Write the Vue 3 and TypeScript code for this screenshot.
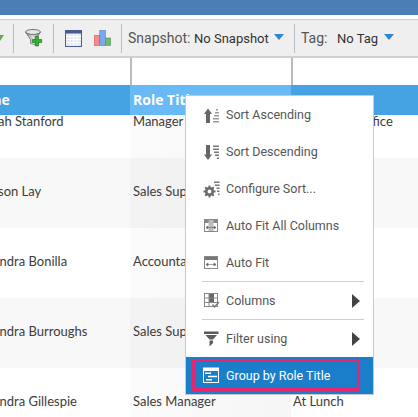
<script setup lang="ts">
interface Row { name: string; role: string; status: string }
const rows: Row[] = [
  { name: 'Sarah Stanford', role: 'Manager', status: 'Away from Office' },
  { name: 'Allison Lay', role: 'Sales Support', status: 'In Office' },
  { name: 'Leandra Bonilla', role: 'Accountant', status: 'In Office' },
  { name: 'Leandra Burroughs', role: 'Sales Support', status: 'In Office' },
  { name: 'Leandra Gillespie', role: 'Sales Manager', status: 'At Lunch' }
]
</script>

<template>
  <div class="page">
    <div class="topbar"></div>
    <div class="toolbar">
      <svg class="ico-arrow" width="4" height="10" viewBox="0 0 4 10"><path d="M-4 2H4L0 8Z" fill="#6aa84f" /></svg>
      <span class="sep s1"></span>
      <svg class="tool funnel" width="18" height="18" viewBox="0 0 18 18">
        <defs>
          <linearGradient id="fg" x1="0" x2="1" y1="0" y2="0"><stop offset="0" stop-color="#7f8a7f" /><stop offset=".5" stop-color="#dfe4df" /><stop offset="1" stop-color="#6d776d" /></linearGradient>
        </defs>
        <ellipse cx="8" cy="3" rx="7.5" ry="2.5" fill="#e4e8e4" stroke="#6f776f" />
        <path d="M.8 3.6 5.5 10.5V14.5L10.5 16V10.5L15.2 3.6C11 6.4 5 6.4 .8 3.6Z" fill="url(#fg)" stroke="#666e66" stroke-width=".7" />
        <path d="M10.5 7.5h3v3h3.2v3h-3.2v3.5h-3V13.500H7.300v-3h3.200Z" fill="#35b035" stroke="#1f7d1f" stroke-width=".7" />
      </svg>
      <span class="sep s2"></span>
      <svg class="tool table" width="17" height="17" viewBox="0 0 17 17">
        <rect x=".5" y=".5" width="16" height="16" fill="#e6e6f0" stroke="#4a5f92" />
        <rect x="0" y="0" width="17" height="3.5" fill="#465a8d" />
        <path d="M1 6.500H16M1 9.500H16M1 12.500H16M5 4V16M8.500 4V16M12 4V16" stroke="#fff" stroke-width="1" />
      </svg>
      <svg class="tool chart" width="17" height="16" viewBox="0 0 17 16">
        <rect x="0" y="5.500" width="5.500" height="10" fill="#f58a8a" stroke="#d94f4f" stroke-width=".6" />
        <rect x="5.800" y=".5" width="5.500" height="15" fill="#78a8ee" stroke="#4a7fd0" stroke-width=".6" />
        <rect x="11.600" y="8" width="5" height="7.500" fill="#72b772" stroke="#4a944a" stroke-width=".6" />
      </svg>
      <span class="sep s3"></span>
      <span class="lbl snap">Snapshot:</span>
      <span class="val nosnap">No Snapshot</span>
      <span class="caret c1"></span>
      <span class="sep s4"></span>
      <span class="lbl tag">Tag:</span>
      <span class="val notag">No Tag</span>
      <span class="caret c2"></span>
    </div>
    <div class="spacer">
      <span class="line l1"></span>
      <span class="line l2"></span>
    </div>
    <div class="grid">
      <div class="head">
        <div class="hc name">Name</div>
        <div class="hc role">Role Title</div>
        <div class="hc status">Status</div>
      </div>
      <div class="body">
        <div v-for="(r, i) in rows" :key="r.name" class="row" :class="{ alt: i % 2 === 1 }">
          <div class="c name">{{ r.name }}</div>
          <div class="c role">{{ r.role }}</div>
          <div class="c status">{{ r.status }}</div>
        </div>
      </div>
    </div>

    <div class="menu">
      <div class="item">
        <svg class="mi" width="18" height="18" viewBox="0 0 18 18">
          <path d="M5 2.500 9 8H7V17H3V8H1Z" fill="#666" />
          <path d="M13 3h2v1.500h-2zM12 6h4v1.500h-4zM11 9h5v1.500h-5zM10 12h6v1.500h-6zM10 15h6v1.500h-6z" fill="#999" />
        </svg>
        <span>Sort Ascending</span>
      </div>
      <div class="item">
        <svg class="mi" width="18" height="18" viewBox="0 0 18 18">
          <path d="M3 2H7V11.500H9L5 17 1 11.500H3Z" fill="#666" />
          <path d="M10 2.500h6v1.500h-6zM10 5.500h6v1.500h-6zM11 8.500h5v1.500h-5zM12 11.500h4v1.500h-4zM14 14.500h2v1.500h-2z" fill="#777" />
        </svg>
        <span>Sort Descending</span>
      </div>
      <div class="item">
        <svg class="mi" width="18" height="18" viewBox="0 0 18 18">
          <circle cx="6.500" cy="11.500" r="3.300" fill="none" stroke="#6a6a6a" stroke-width="2.600" />
          <path d="M6.500 5.500v2M6.500 15.500v2M.5 11.500h2M10.500 11.500h2M2.300 7.300l1.400 1.400M9.300 14.300l1.400 1.400M10.700 7.300l-1.400 1.400M3.700 14.300l-1.400 1.400" stroke="#6a6a6a" stroke-width="2" />
          <path d="M11 1.500h5.500v1.500H11zM12 4.500h4.500v1.500H12zM13.500 7.500h3v1.500h-3zM14 10.500h2.500v1.500H14zM15 13.500h1.500v1.500H15z" fill="#777" />
        </svg>
        <span>Configure Sort...</span>
      </div>
      <div class="item">
        <svg class="mi" width="18" height="18" viewBox="0 0 18 18">
          <rect x="1.500" y="2.500" width="13" height="12" fill="#fff" stroke="#888" />
          <rect x="2" y="3" width="12" height="3" fill="#888" />
          <rect x="5.500" y="3" width="5" height="11" fill="#bdbdbd" />
          <path d="M3 10.500H13M3 10.500l2-1.500V12ZM13 10.500l-2-1.500V12Z" fill="#666" stroke="#666" stroke-width=".6" />
        </svg>
        <span>Auto Fit All Columns</span>
      </div>
      <div class="item">
        <svg class="mi" width="18" height="18" viewBox="0 0 18 18">
          <rect x="1.500" y="2.500" width="13" height="12" fill="#fff" stroke="#888" />
          <rect x="2" y="3" width="12" height="3" fill="#777" />
          <path d="M3 10.500H13M3 10.500l2-1.500V12ZM13 10.500l-2-1.500V12Z" fill="#666" stroke="#666" stroke-width=".6" />
        </svg>
        <span>Auto Fit</span>
      </div>
      <div class="rule"></div>
      <div class="item">
        <svg class="mi" width="18" height="18" viewBox="0 0 18 18">
          <rect x="1.500" y="1.500" width="13" height="13" fill="#fff" stroke="#888" />
          <rect x="6" y="2" width="5" height="9" fill="#666" />
          <path d="M2 6H14M2 10.500H14M6 2V14" stroke="#888" />
          <path d="M9.500 12.500l2 2.500 4.500-5" fill="none" stroke="#777" stroke-width="1.300" />
        </svg>
        <span>Columns</span>
        <span class="tri"></span>
      </div>
      <div class="rule r2"></div>
      <div class="item">
        <svg class="mi" width="18" height="18" viewBox="0 0 18 18">
          <path d="M1 1.500H15.500V4H1ZM2.500 5H14L10 9.500H6.500ZM6.500 10.500H10V13L7 16H6.500Z" fill="#5c5c5c" />
        </svg>
        <span>Filter using</span>
        <span class="tri"></span>
      </div>
      <div class="item active">
        <svg class="mi" width="18" height="18" viewBox="0 0 18 18">
          <rect x="0" y=".5" width="16" height="15.500" fill="#fff" />
          <rect x="1" y="4" width="14" height="11" fill="#1b7ecb" />
          <path d="M2 6.200H8M5 9.500H14M3 12.800H9" stroke="#fff" stroke-width="1.400" />
        </svg>
        <span>Group by Role Title</span>
        <span class="mark"></span>
      </div>
    </div>
  </div>
</template>

<style>
html, body { margin: 0; overflow: hidden; background: #fff; }
</style>

<style scoped>
.page { position: relative; width: 418px; height: 417px; overflow: hidden; background: #fff; font-family: "Roboto", sans-serif; }
.topbar { height: 15px; background: #4a7eb4; }
.toolbar { margin-top: 4px; height: 36px; border-top: 1px solid #cfcfcf; border-bottom: 2px solid #cfcfcf; background: #efefef; display: flex; align-items: center; white-space: nowrap; }
.ico-arrow { width: 4px; flex: none; }
.sep { width: 1px; height: 29px; background: #b4bec9; flex: none; }
.s1 { margin-left: 9px; }
.funnel { margin-left: 11px; margin-right: 10px; }
.table { margin-left: 11px; }
.chart { margin-left: 12px; }
.s3 { margin-left: 10px; }
.lbl { font-size: 14px; color: #555; }
.val { font-size: 13px; color: #333; }
.snap { margin-left: 6px; width: 61px; flex: none; }
.nosnap { margin-left: 5px; width: 74px; flex: none; }
.caret { width: 0; height: 0; border-left: 5px solid transparent; border-right: 5px solid transparent; border-top: 6px solid #2d86cf; margin-top: -2px; flex: none; }
.c1 { margin-left: 6px; }
.s4 { margin-left: 10px; }
.tag { margin-left: 6px; width: 36px; flex: none; }
.notag { width: 41px; flex: none; }
.c2 { margin-left: 6px; }
.spacer { height: 27px; display: flex; }
.line { width: 2px; background: #bbb; flex: none; }
.l1 { margin-left: 130px; }
.l2 { margin-left: 159px; }
.grid { margin-left: -38px; }
.head { display: flex; height: 30px; position: relative; background: #45a2e3; color: #fff; font: 700 14px/30px "Open Sans", sans-serif; }
.hc, .c { box-sizing: border-box; padding-left: 3px; white-space: nowrap; overflow: hidden; flex: none; }
.name { width: 168px; padding-left: 18px; }
.head .name { padding-left: 6px; }
.role { width: 161px; }
.head .role { background: #67baf5; }
.status { width: 170px; padding-left: 2px; }
.body { margin-top: -27px; }
.row { display: flex; height: 70px; color: #3c3c3c; font: 13px/66px "Lato", sans-serif; background: #fff; }
.row.alt { background: #f8f8f8; }
.row .role { background: linear-gradient(90deg, #fbfbfb, #f6f6f6); }
.row.alt .role { background: linear-gradient(90deg, #f3f3f3, #efefef); }
.menu { position: absolute; left: 185px; top: 95px; width: 187px; height: 298px; border: 1px solid #c9c9c9; background: #fff; display: flex; flex-direction: column; color: #555; font-size: 12.5px; }
.item { position: relative; height: 37px; flex: none; display: flex; align-items: center; padding-left: 17px; box-sizing: border-box; }
.mi { flex: none; margin-right: 5px; }
.rule { height: 1px; flex: none; margin: 0 9px 0 16px; background: #cfcfcf; }
.tri { position: absolute; left: 166px; top: 12px; width: 0; height: 0; border-left: 8px solid #444; border-top: 7px solid transparent; border-bottom: 7px solid transparent; }
.item.active { background: #1b7ecb; color: #fff; }
.mark { position: absolute; left: 6px; top: 2px; width: 168px; height: 32px; box-sizing: border-box; border: 3px solid #e8256f; }
</style>
